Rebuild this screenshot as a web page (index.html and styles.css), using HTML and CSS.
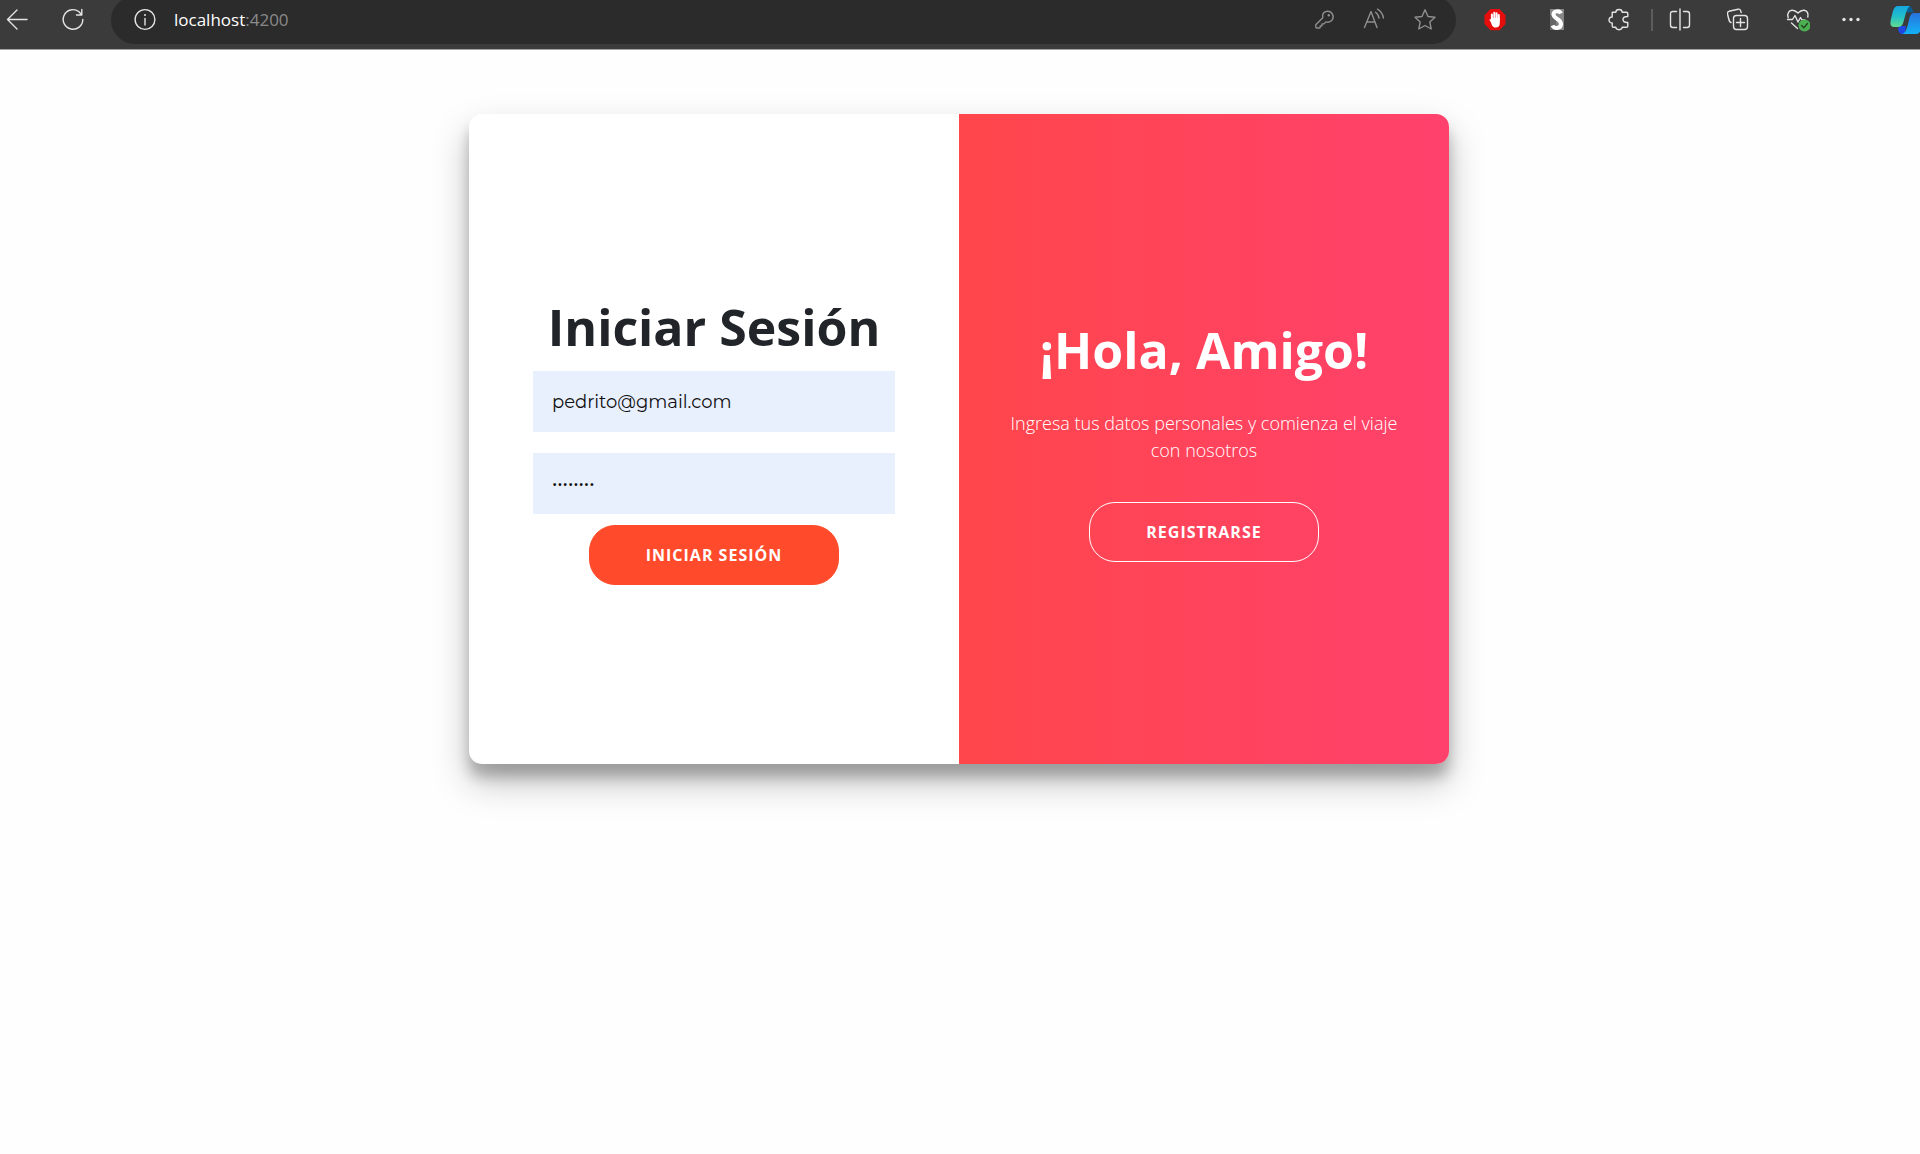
FILE: index.html
```html
<!DOCTYPE html>
<html lang="es">
<head>
<meta charset="utf-8">
<title>Iniciar Sesión</title>
<meta name="viewport" content="width=device-width, initial-scale=1">
<link rel="stylesheet" href="styles.css">
</head>
<body>
<header class="toolbar">
  <nav class="nav-buttons" aria-label="Navegación">
    <button class="icon-button" type="button" aria-label="Atrás">
      <svg viewBox="0 0 24 24"><path d="M22 11.5H2.500M12 2L2.500 11.500L12 21"/></svg>
    </button>
    <button class="icon-button" type="button" aria-label="Actualizar">
      <svg viewBox="0 0 24 24"><path d="M21.800 11.500A9.800 9.800 0 1 1 17.700 3.500L20.500 6.500M20.800 1.500V7H15.500"/></svg>
    </button>
  </nav>
  <div class="address">
    <button class="icon-button" type="button" aria-label="Información del sitio">
      <svg viewBox="0 0 24 24"><circle cx="12" cy="11.500" r="9.900"/><path d="M12 10.500V17"/><circle class="solid" cx="12" cy="7" r="1"/></svg>
    </button>
    <span class="url">localhost<span class="port">:4200</span></span>
    <div class="address-actions">
      <button class="icon-button" type="button" aria-label="Contraseñas">
        <svg viewBox="0 0 24 24"><path d="M14.300 3.200a5.600 5.600 0 0 1 4.900 8.700c-1.600 2.300-4.300 2.700-6.400 2l-1.800 2H9v2H7.200v1.500L6.500 20H3.800c-.7 0-1-.4-1-1v-2.200l7-7c-1-3.500 1-6.400 4.500-6.600z"/><circle class="solid" cx="15.800" cy="7.200" r="1.200"/></svg>
      </button>
      <button class="icon-button" type="button" aria-label="Leer en voz alta">
        <svg viewBox="0 0 24 24"><path d="M1.500 19.500L8 3.500L14 19.500M3.800 14H11.800M12.500 4.200c2 1.400 3.200 3.300 3.500 6M14.500 1.200c3.300 2 5.300 5 6 8.800"/></svg>
      </button>
      <button class="icon-button" type="button" aria-label="Favoritos">
        <svg viewBox="0 0 24 24"><path d="M12 1.800L15 8.500L22 9.200L16.800 14L18.200 21L12 17.500L5.800 21L7.200 14L2 9.200L9 8.500Z"/></svg>
      </button>
    </div>
  </div>
  <div class="extensions">
    <button class="icon-button" type="button" aria-label="Bloqueador de anuncios">
      <svg viewBox="0 0 24 24"><path d="M7.500 1H16.500L22.500 7.200V16L16.500 22.200H7.500L1.500 16V7.200Z" fill="#e60d0d" stroke="none"/><path d="M8.900 12V6.500M11.300 11V4.800M13.600 11V5.200M15.800 12V7" stroke="#fff" stroke-width="2"/><path d="M8 10H16.800V15C16.800 18 15.500 19.500 12.500 19.500C9.500 19.500 8.800 17 8 14.500L6.300 11.800L7.500 11L8.500 12Z" fill="#fff" stroke="none"/></svg>
    </button>
    <button class="icon-button" type="button" aria-label="Extensión S">
      <svg viewBox="0 0 24 24"><path d="M5 1H19V22H5Z" fill="#858585" stroke="none"/><path d="M5 6L11 12V22H5Z" fill="#666" stroke="none"/><path d="M15.800 5.500C14.800 2.500 8.500 2.500 8.500 6.500C8.500 11 16 10.500 16 16C16 21 9 21 7.500 17.500" stroke="#fff" stroke-width="4" stroke-linecap="butt"/></svg>
    </button>
    <button class="icon-button" type="button" aria-label="Extensiones">
      <svg viewBox="0 0 24 24"><path d="M5.200 4.200H8.800C9 .6 15 .6 15.200 4.200H19.500Q20.800 4.200 20.800 5.500V8.500C17 8.300 16 10 16 11.500C16 13 17 14.700 20.800 14.500V18Q20.800 19.300 19.500 19.300H15.200C15 22.500 9 22.500 8.800 19.300H6.500Q5.200 19.300 5.200 18V15C1 15.200 1 8.700 5.200 9Z"/></svg>
    </button>
  </div>
  <span class="separator"></span>
  <div class="tools">
    <button class="icon-button" type="button" aria-label="Pantalla dividida">
      <svg viewBox="0 0 24 24"><path d="M12 1V22M8.500 3.500H5Q2.500 3.500 2.500 6V17Q2.500 19.500 5 19.500H8.500M15.500 3.500H19Q21.500 3.500 21.500 6V17Q21.500 19.500 19 19.500H15.500"/></svg>
    </button>
    <button class="icon-button" type="button" aria-label="Colecciones">
      <svg viewBox="0 0 24 24"><rect x="6.500" y="7.500" width="14" height="14" rx="3"/><path d="M13.500 10.500V18.500M9.500 14.500H17.500M4 14.500C2.500 14 2 12.500 1.500 10L.5 6Q0 4 2 3.300L11 1.200Q13 .8 13.600 2.600L14.200 4.500"/></svg>
    </button>
    <button class="icon-button" type="button" aria-label="Rendimiento">
      <svg viewBox="0 0 24 24"><path d="M2.200 9.500C.8 5 3 2.500 6 2.200C9 2 10.500 3.500 12 5C13.500 3.500 15 2 18 2.200C21 2.500 22.800 5.500 21.800 9M1.500 11.500H6.500L9 7.500L12 14L14.500 9.500L16 12H19M5.500 15L11.500 20.500"/><circle cx="18.500" cy="17.500" r="6" fill="#4caf50" stroke="none"/><path d="M15.500 17.500L17.800 19.700L21.500 15.500" stroke="#204522"/></svg>
    </button>
  </div>
  <div class="browser-menu">
    <button class="icon-button" type="button" aria-label="Más opciones">
      <svg viewBox="0 0 24 24"><g class="solid"><circle cx="5" cy="11.500" r="1.700"/><circle cx="12" cy="11.500" r="1.700"/><circle cx="19" cy="11.500" r="1.700"/></g></svg>
    </button>
    <button class="icon-button copilot" type="button" aria-label="Copilot">
      <svg viewBox="0 0 34 32">
        <defs>
          <linearGradient id="leaf" x1="0" y1="0" x2="0" y2="1"><stop offset="0" stop-color="#15a6e0"/><stop offset=".5" stop-color="#22bfc9"/><stop offset="1" stop-color="#62dc91"/></linearGradient>
          <linearGradient id="wave" x1="0" y1="1" x2="0" y2="0"><stop offset="0" stop-color="#12b3f7"/><stop offset="1" stop-color="#2872dd"/></linearGradient>
        </defs>
        <path d="M17 2H19C22 2 22 6 24 8.500H17Z" fill="#075d91" stroke="none"/>
        <path d="M9 22H16L15 30H12Q9 30 8 25Z" fill="#2047e5" stroke="none"/>
        <path d="M8 2H20C17 4 16 9 14 16C13 20 12 23 8 23H4C0 23 0 19 1 15L3 7Q4.500 2 8 2Z" fill="url(#leaf)" stroke="none"/>
        <path d="M24 9H30C34 9 34 12 33 16L31 25Q30 30 26 30H12C16 29 17 24 19 16Q20 9 24 9Z" fill="url(#wave)" stroke="none"/>
      </svg>
    </button>
  </div>
</header>
<main class="page">
  <div class="card">
    <form class="panel sign-in">
      <h1 class="title">Iniciar Sesión</h1>
      <input class="field" type="email" aria-label="Correo electrónico" value="pedrito@gmail.com">
      <input class="field" type="password" aria-label="Contraseña" value="pedrito1">
      <button class="button" type="submit">Iniciar Sesión</button>
    </form>
    <section class="panel welcome">
      <h2 class="title">¡Hola, Amigo!</h2>
      <p class="message">Ingresa tus datos personales y comienza el viaje con nosotros</p>
      <button class="button ghost" type="button">Registrarse</button>
    </section>
  </div>
</main>
</body>
</html>
```
FILE: styles.css
```css
* {
  box-sizing: border-box;
}

body {
  margin: 0;
  background: #fefefe;
  color: #212529;
  font-family: "Segoe UI", "Open Sans", "Noto Sans", sans-serif;
}

button,
input {
  font-family: inherit;
}

.toolbar {
  display: flex;
  align-items: center;
  height: 50px;
  padding: 0 0 10px 5px;
  overflow: hidden;
  background: #3b3b3b;
  border-bottom: 1px solid #a5a5a5;
  color: #e4e4e4;
}

.nav-buttons {
  display: flex;
  gap: 32px;
}

.icon-button {
  flex: none;
  width: 24px;
  height: 24px;
  padding: 0;
  border: 0;
  background: none;
  color: inherit;
}

.icon-button svg {
  display: block;
  width: 100%;
  height: 100%;
  fill: none;
  stroke: currentColor;
  stroke-width: 1.4;
  stroke-linecap: round;
  stroke-linejoin: round;
}

.icon-button .solid {
  fill: currentColor;
  stroke: none;
}

.address {
  flex: 1;
  display: flex;
  align-items: center;
  height: 48px;
  margin: 0 27px 0 26px;
  padding: 0 19px 0 22px;
  border-radius: 24px;
  background: #2b2b2b;
}

.url {
  margin-left: 17px;
  color: #fff;
  font-size: 17px;
  line-height: 24px;
}

.port {
  color: #8a8a8a;
}

.address-actions {
  display: flex;
  gap: 26px;
  margin-left: auto;
  color: #8f8f8f;
}

.extensions {
  display: flex;
  gap: 38px;
}

.separator {
  width: 2px;
  height: 22px;
  margin: 0 15px 0 20px;
  background: #5c5c5c;
}

.tools {
  display: flex;
  gap: 35px;
}

.browser-menu {
  display: flex;
  align-items: center;
  gap: 27px;
  margin-left: 29px;
}

.copilot {
  width: 30px;
  height: 32px;
  overflow: hidden;
}

.copilot svg {
  width: 34px;
}

.page {
  display: flex;
  justify-content: center;
  padding: 64px 24px;
}

.card {
  display: grid;
  grid-template-columns: 1fr 1fr;
  width: 100%;
  max-width: 980px;
  min-height: 650px;
  margin-right: 2px;
  overflow: hidden;
  border-radius: 13px;
  background: #fff;
  box-shadow: 0 18px 36px rgba(0, 0, 0, 0.25), 0 13px 13px rgba(0, 0, 0, 0.22);
}

.panel {
  display: flex;
  flex-direction: column;
  align-items: center;
  justify-content: center;
  text-align: center;
}

.sign-in {
  padding: 0 64px;
}

.welcome {
  padding: 0 50px;
  background: linear-gradient(to right, #ff464b, #ff416c);
  color: #fff;
}

.title {
  margin: 0;
  font-size: 50px;
  font-weight: 700;
  line-height: 68px;
}

.field {
  width: 100%;
  height: 61px;
  margin: 10px 0 11px;
  padding: 0 19px;
  border: 0;
  border-radius: 0;
  background: #e8f0fe;
  color: #111;
  font-family: Montserrat, Inter, sans-serif;
  font-size: 18px;
}

.button {
  height: 60px;
  padding: 0 56px;
  border: 1px solid #ff4b2b;
  border-radius: 26px;
  background: #ff4b2b;
  color: #fff;
  font-size: 16px;
  font-weight: 700;
  letter-spacing: 1px;
  text-transform: uppercase;
}

.ghost {
  border-color: #fff;
  background: transparent;
}

.message {
  margin: 26px 0 38px;
  font-size: 18px;
  font-weight: 300;
  line-height: 27px;
}
```
